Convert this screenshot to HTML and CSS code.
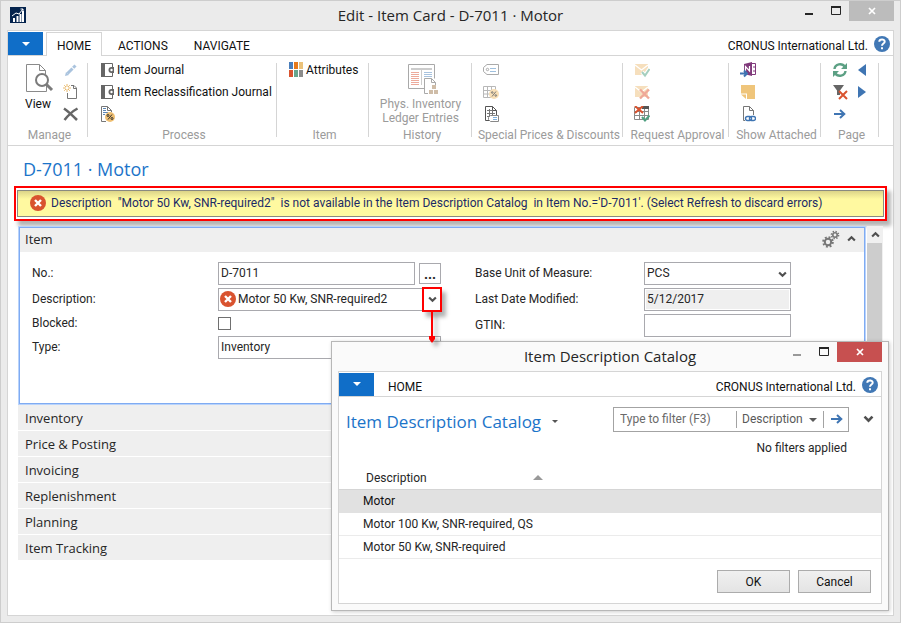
FILE: index.html
```html
<!DOCTYPE html>
<html lang="en">
<head>
<meta charset="utf-8">
<title>Edit - Item Card - D-7011 · Motor</title>
<link rel="stylesheet" href="styles.css">
</head>
<body>
<svg class="defs" aria-hidden="true">
  <symbol id="error" viewBox="0 0 16 16"><circle cx="8" cy="8" r="8" fill="#d9532f"/><path d="M5 5l6 6M11 5l-6 6" stroke="#fff" stroke-width="2.4"/></symbol>
  <symbol id="help" viewBox="0 0 16 16"><circle cx="8" cy="8" r="8" fill="#4178b5"/><path d="M5.3 5.8C5.4 2.7 10.700 2.700 10.700 5.700C10.700 7.600 8 7.500 8 9.700" fill="none" stroke="#fff" stroke-width="2"/><path d="M7 11.200h2v2h-2z" fill="#fff"/></symbol>
  <symbol id="minimize" viewBox="0 0 10 12"><path d="M1 9h8" stroke="currentColor" stroke-width="2"/></symbol>
  <symbol id="maximize" viewBox="0 0 10 12"><path d="M.5 2v7.500h9V2" fill="none" stroke="currentColor"/><path d="M0 2h10" stroke="currentColor" stroke-width="2"/></symbol>
  <symbol id="close" viewBox="0 0 8 8"><path d="M1 1l6 6M7 1L1 7" stroke="#fff" stroke-width="1.700"/></symbol>
  <symbol id="chevron" viewBox="0 0 8 6"><path d="M1 1.200l3 3 3-3" fill="none" stroke="#505050" stroke-width="1.900"/></symbol>
  <symbol id="triangle" viewBox="0 0 8 4"><path d="M0 0h8L4 4z" fill="currentColor"/></symbol>
  <symbol id="arrow" viewBox="0 0 16 16"><path d="M2 8h10M8 4l4.300 4L8 12" fill="none" stroke="#3f75b3" stroke-width="2"/></symbol>
  <symbol id="journal" viewBox="0 0 16 16"><path d="M0 1h4v14H0z" fill="#666"/><path d="M3 1.500h8.500V5M11.500 11v3.500H3" fill="none" stroke="#666"/><path d="M13 5v6h-2.500a3 3 0 010-6z" fill="#666"/><circle cx="10.500" cy="8" r="1.200" fill="#fff"/></symbol>
  <symbol id="envelope" viewBox="0 0 16 16"><path d="M1 2h13v11H1z" fill="#f6dfbd"/><path d="M1 3l6.500 5L14 3" fill="none" stroke="#fff" stroke-width="1.300"/></symbol>
</svg>

<div class="window">
  <header class="titlebar">
    <svg class="app-icon" viewBox="0 0 16 16"><path d="M0 0h16v16H0z" fill="#04234d"/><path d="M3 11h2v4H3zM6.500 9h2v6h-2zM9.500 7h2v8h-2zM12 4h2v11h-2z" fill="#fff"/><path d="M2 9l4-3 3 1 4-5M10.500 2H13v2.500" fill="none" stroke="#fff"/></svg>
    <h1>Edit - Item Card - D-7011 · Motor</h1>
    <div class="window-buttons">
      <button aria-label="Minimize"><svg><use href="#minimize"/></svg></button>
      <button aria-label="Maximize"><svg><use href="#maximize"/></svg></button>
      <button class="close" aria-label="Close"><svg><use href="#close"/></svg></button>
    </div>
  </header>

  <div class="client">
    <nav class="tabs">
      <button class="app-menu" aria-label="Application menu"><svg><use href="#triangle"/></svg></button>
      <a href="#home" class="tab active">HOME</a>
      <a href="#actions" class="tab">ACTIONS</a>
      <a href="#navigate" class="tab">NAVIGATE</a>
      <span class="company">CRONUS International Ltd.</span>
      <button class="help" aria-label="Help"><svg><use href="#help"/></svg></button>
    </nav>

    <div class="ribbon">
      <section class="group manage">
        <div class="tools">
          <button class="big">
            <svg class="view-icon" viewBox="-4 0 32 30"><path d="M20.500 17v10.500H.5v-27h13l6 6V10M13.500.5v6h6" fill="none" stroke="#8a8a8a"/><circle cx="16" cy="16" r="6" fill="#fff" stroke="#7b7b7b" stroke-width="2"/><path d="M20.500 20.500l5.500 5.500" stroke="#7b7b7b" stroke-width="3"/></svg>
            View
          </button>
          <div class="stack">
            <button aria-label="Edit"><svg viewBox="0 0 16 16"><path d="M4.500 11.500L9.500 6.500" stroke="#a9c3de" stroke-width="3"/><path d="M10.200 5.800l2.300-2.300" stroke="#a9c3de" stroke-width="3"/><path d="M3 10l3 3-4 1z" fill="#a9c3de"/></svg></button>
            <button aria-label="New"><svg viewBox="0 0 16 16"><path d="M8 1.500h3l2.500 2.500v10.500h-9V9M10.500 1.500v3h3" fill="none" stroke="#777"/><path d="M4 0v8M0 4h8M1.200 1.200l5.600 5.600M6.800 1.200L1.200 6.800" stroke="#e8b96c"/><circle cx="4" cy="4" r="1.200" fill="#fff"/></svg></button>
            <button aria-label="Delete"><svg viewBox="0 0 16 16"><path d="M1 2.500C6 6 10 10 14 14M14.500 2.500C9 5.500 5 9.500 1.500 14" fill="none" stroke="#666" stroke-width="2.500"/></svg></button>
          </div>
        </div>
        <h2>Manage</h2>
      </section>
      <section class="group process">
        <div class="tools stack">
          <button><svg><use href="#journal"/></svg>Item Journal</button>
          <button><svg><use href="#journal"/></svg>Item Reclassification Journal</button>
          <button aria-label="Calculate"><svg viewBox="0 0 16 16"><path d="M5 15.500H.5V.5h6l4 4V6M6.500.5v4h4" fill="none" stroke="#777"/><path d="M2 2.500h3M2 4.500h3M2 6.500h5M2 8.500h2" stroke="#5c86b4"/><circle cx="9" cy="11" r="5" fill="#efbf72"/><path d="M7 13.500l4-5" stroke="#333"/><circle cx="7" cy="9.500" r="1" fill="none" stroke="#333"/><circle cx="11" cy="12.500" r="1" fill="none" stroke="#333"/></svg></button>
        </div>
        <h2>Process</h2>
      </section>
      <section class="group item">
        <div class="tools stack">
          <button class="roomy"><svg viewBox="0 0 16 16"><path d="M1 0h4v7H1z" fill="#4a7ebb"/><path d="M6 0h4v7H6z" fill="#e7791a"/><path d="M11 0h4v7h-4z" fill="#ebc27a"/><path d="M1 8h4v7H1z" fill="#d9532f"/><path d="M6 8h4v7H6z" fill="#67a58d"/><path d="M11 8h4v7h-4z" fill="#8c8c8c"/></svg>Attributes</button>
        </div>
        <h2>Item</h2>
      </section>
      <section class="group history">
        <div class="tools">
          <button class="big" disabled>
            <svg class="ledger-icon" viewBox="0 0 30 30"><path d="M.5.500h26v14M16 24.500H.5V.500" fill="none" stroke="#a9a9a9"/><path d="M3 5h21" stroke="#ccc" stroke-width="2"/><path d="M13.500 6v15" stroke="#ccc"/><path d="M3 8.500h8M3 10.500h8M3 12.500h8M3 14.500h8M3 16.500h8M3 18.500h8M3 20.500h8" stroke="#edaa9b"/><path d="M16 8.500h8M16 10.500h8M16 12.500h8" stroke="#a8c3df"/><path d="M20 29.500h-3.500v-15h7l4 4V21M23.500 14.500v4h4" fill="#fff" stroke="#a9a9a9"/><path d="M24 21h4v4h-4zM21 26h4v4h-4zM26 26h4v4h-4z" fill="#cfbda8"/></svg>
            Phys. Inventory<br>Ledger Entries
          </button>
        </div>
        <h2>History</h2>
      </section>
      <section class="group prices">
        <div class="tools stack">
          <button aria-label="Prices"><svg viewBox="0 0 16 16"><path d="M4 2.500h11.500v10H4L.5 9.500v-4z" fill="#fff" stroke="#aaa"/><circle cx="4.500" cy="7.500" r="1.200" fill="none" stroke="#aaa"/><path d="M7 6.500h6M7 9.500h6" stroke="#9fc0de"/></svg></button>
          <button aria-label="Line discounts"><svg viewBox="0 0 16 16"><path d="M.5 2.500h12v11H.5zM.5 6.500h12M.5 10h12M4.500 2.500v11M8.500 2.500v11" fill="none" stroke="#b8b8b8"/><circle cx="11" cy="10" r="5" fill="#f8dfb6"/><path d="M9 12.500l4-5" stroke="#777"/><circle cx="9.200" cy="8.500" r=".8" fill="none" stroke="#777"/><circle cx="12.800" cy="11.500" r=".8" fill="none" stroke="#777"/></svg></button>
          <button aria-label="Special prices"><svg viewBox="0 0 16 16"><path d="M6 14.500H2.500v-14h7l4 4V9M9.500.5v4h4" fill="none" stroke="#555"/><path d="M4 4.500h6M4 7.500h8M4 10.500h3M6.500 3v9M9.500 5v4" stroke="#777"/><path d="M7.500 9.500h8v6h-8l-2-2v-2z" fill="#fff" stroke="#888"/><path d="M10 11.500h4M10 13.500h4" stroke="#7fb0dd"/></svg></button>
        </div>
        <h2>Special Prices &amp; Discounts</h2>
      </section>
      <section class="group approval">
        <div class="tools stack">
          <button aria-label="Send approval request" disabled><svg viewBox="0 0 16 16"><use href="#envelope"/><path d="M8 10l3 3.500L15.500 7" fill="none" stroke="#fff" stroke-width="4"/><path d="M8 10l3 3.500L15.500 7" fill="none" stroke="#a5cfbf" stroke-width="2"/></svg></button>
          <button aria-label="Cancel approval request" disabled><svg viewBox="0 0 16 16"><use href="#envelope"/><path d="M6 5.500l9 9M15 5.500l-9 9" stroke="#efa898" stroke-width="2.400"/></svg></button>
          <button aria-label="Approvals"><svg viewBox="0 0 16 16"><path d="M.5 1.500h14v12H.5zM.5 5.500h14M.5 9.500h14M5.500 1.500v12M10.500 1.500v12" fill="none" stroke="#888"/><path d="M8 0h7v3H8z" fill="#555"/><path d="M1 0l8 7M9 0L1 7" stroke="#d9532f" stroke-width="2"/><path d="M8 11l3 3.500 4.500-5" fill="none" stroke="#4f9f80" stroke-width="2"/></svg></button>
        </div>
        <h2>Request Approval</h2>
      </section>
      <section class="group attached">
        <div class="tools stack">
          <button aria-label="OneNote"><svg viewBox="0 0 16 16"><path d="M4 2l8-2v14l-8-2z" fill="#80397b"/><path d="M12 1.500h3.500v11H12M13 5h3M13 9h3" fill="none" stroke="#80397b"/><path d="M5.500 9V4.500l4 4.500V4" fill="none" stroke="#fff" stroke-width="1.200"/><path d="M0 11.500h6M4 8.500l3 3-3 3" fill="none" stroke="#3f75b3" stroke-width="2"/></svg></button>
          <button aria-label="Notes"><svg viewBox="0 0 16 16"><path d="M1 1h14v14H7V9.500H1z" fill="#efc57b"/><path d="M1 10.500h5V15z" fill="#efc57b"/></svg></button>
          <button aria-label="Links"><svg viewBox="0 0 16 16"><path d="M5 14.500H3.500v-14h6l4 4V9M9.500.5v4h4" fill="none" stroke="#777"/><rect x="5.500" y="10.500" width="6" height="4" rx="2" fill="#fff" stroke="#3f75b3" stroke-width="1.400"/><rect x="9.500" y="10.500" width="6" height="4" rx="2" fill="none" stroke="#3f75b3" stroke-width="1.400"/></svg></button>
        </div>
        <h2>Show Attached</h2>
      </section>
      <section class="group page">
        <div class="tools">
          <div class="stack">
            <button aria-label="Refresh"><svg viewBox="0 0 16 16"><path d="M2.500 7C3 2 10 .5 13 5M13.500 9C13 14 6 15.500 3 11" fill="none" stroke="#5ca084" stroke-width="2.400"/><path d="M15 1v6H9zM1 15V9h6z" fill="#5ca084"/></svg></button>
            <button aria-label="Clear filter"><svg viewBox="0 0 16 16"><path d="M1 1h11L8 6.500V11H5V6.500z" fill="#666"/><path d="M7 7l8 8M15 7l-8 8" stroke="#d9532f" stroke-width="2"/></svg></button>
            <button aria-label="Go to"><svg><use href="#arrow"/></svg></button>
          </div>
          <div class="stack">
            <button aria-label="Previous"><svg viewBox="0 0 16 16"><path d="M9 2v12L1 8z" fill="#3f75b3"/></svg></button>
            <button aria-label="Next"><svg viewBox="0 0 16 16"><path d="M1 2v12l8-6z" fill="#3f75b3"/></svg></button>
          </div>
        </div>
        <h2>Page</h2>
      </section>
    </div>

    <main class="card">
      <h2 class="page-title">D-7011 · Motor</h2>
      <div class="callout">
        <div class="message" role="alert"><svg><use href="#error"/></svg><span>Description&nbsp; "Motor 50 Kw, SNR-required2"&nbsp; is not available in the Item Description Catalog&nbsp; in Item No.='D-7011'. (Select Refresh to discard errors)</span></div>
      </div>
      <div class="scroll-area">
        <div class="fasttabs">
          <section class="fasttab-open">
            <header>
              <h3>Item</h3>
              <svg class="gears" viewBox="0 0 18 18"><g fill="none" stroke="#777"><circle cx="6" cy="12" r="3.200" stroke-width="2"/><circle cx="6" cy="12" r="4.800" stroke-width="2" stroke-dasharray="1.900 1.870"/><circle cx="13" cy="5" r="2.200" stroke-width="1.600"/><circle cx="13" cy="5" r="3.600" stroke-width="1.500" stroke-dasharray="1.400 1.430"/></g></svg>
              <button class="collapse" aria-label="Collapse"><svg class="up"><use href="#chevron"/></svg></button>
            </header>
            <form class="fields">
              <div class="column left">
                <label for="no">No.:</label>
                <div class="pair"><input id="no" value="D-7011"><button type="button" class="assist" aria-label="Assist edit">...</button></div>
                <label for="description">Description:</label>
                <div class="lookup"><svg class="error-icon"><use href="#error"/></svg><input id="description" value="Motor 50 Kw, SNR-required2">
                  <button type="button" class="drop" aria-label="Look up"><svg class="caret"><use href="#chevron"/></svg></button>
                  <svg class="pointer" viewBox="0 0 10 32"><path d="M5 0v26" stroke="red" stroke-width="2"/><path d="M2 25h6v3L5 32l-3-4z" fill="red"/></svg>
                </div>
                <label for="blocked">Blocked:</label>
                <input type="checkbox" id="blocked">
                <label for="type">Type:</label>
                <div class="select"><select id="type"><option>Inventory</option></select><svg class="caret"><use href="#chevron"/></svg></div>
              </div>
              <div class="column right">
                <label for="uom">Base Unit of Measure:</label>
                <div class="select"><select id="uom"><option>PCS</option></select><svg class="caret"><use href="#chevron"/></svg></div>
                <label for="modified">Last Date Modified:</label>
                <input id="modified" value="5/12/2017" readonly>
                <label for="gtin">GTIN:</label>
                <input id="gtin">
              </div>
            </form>
          </section>
          <button class="fasttab">Inventory</button>
          <button class="fasttab">Price &amp; Posting</button>
          <button class="fasttab">Invoicing</button>
          <button class="fasttab">Replenishment</button>
          <button class="fasttab">Planning</button>
          <button class="fasttab">Item Tracking</button>
        </div>
        <div class="scrollbar"><button aria-label="Scroll up"><svg class="up"><use href="#chevron"/></svg></button><div class="thumb"></div></div>
      </div>
    </main>
  </div>

  <div class="dialog" role="dialog" aria-labelledby="dialog-title">
    <header class="titlebar">
      <h2 id="dialog-title">Item Description Catalog</h2>
      <div class="window-buttons">
        <button class="dim" aria-label="Minimize"><svg><use href="#minimize"/></svg></button>
        <button aria-label="Maximize"><svg><use href="#maximize"/></svg></button>
        <button class="close" aria-label="Close"><svg><use href="#close"/></svg></button>
      </div>
    </header>
    <div class="dialog-body">
      <nav class="tabs">
        <button class="app-menu" aria-label="Application menu"><svg><use href="#triangle"/></svg></button>
        <a href="#dialog-home" class="tab">HOME</a>
        <span class="company">CRONUS International Ltd.</span>
        <button class="help" aria-label="Help"><svg><use href="#help"/></svg></button>
      </nav>
      <div class="list-head">
        <h3 class="page-title">Item Description Catalog <svg><use href="#triangle"/></svg></h3>
        <form class="filter">
          <input aria-label="Type to filter" placeholder="Type to filter (F3)">
          <div class="filter-field"><select aria-label="Filter field"><option>Description</option></select><svg><use href="#triangle"/></svg></div>
          <button type="button" aria-label="Apply filter"><svg><use href="#arrow"/></svg></button>
        </form>
        <button class="expand" aria-label="Expand filter"><svg><use href="#chevron"/></svg></button>
      </div>
      <p class="status">No filters applied</p>
      <table>
        <thead><tr><th><span>Description</span><svg><use href="#triangle"/></svg></th></tr></thead>
        <tbody>
          <tr class="selected"><td>Motor</td></tr>
          <tr><td>Motor 100 Kw, SNR-required, QS</td></tr>
          <tr><td>Motor 50 Kw, SNR-required</td></tr>
        </tbody>
      </table>
      <footer><button>OK</button><button>Cancel</button></footer>
    </div>
  </div>
</div>
</body>
</html>
```
FILE: styles.css
```css
* { box-sizing: border-box; }
body, h1, h2, h3, p { margin: 0; font-weight: normal; }
body, button, input, select {
  font-family: Roboto, "Open Sans", sans-serif;
  font-size: 12px;
  color: #262626;
}
body { line-height: 16px; }
button { padding: 0; border: 0; background: none; line-height: 16px; }
a { color: inherit; text-decoration: none; }
svg { display: block; flex: none; }
.defs { position: absolute; width: 0; height: 0; }

.window {
  position: relative;
  display: flex;
  flex-direction: column;
  min-height: 100vh;
  padding: 0 6px 6px;
  border: 1px solid #cdcdcd;
  background: #ebebeb;
}
.titlebar {
  position: relative;
  display: flex;
  align-items: center;
  justify-content: center;
  height: 29px;
}
.titlebar h1, .titlebar h2 { font-family: "Open Sans", sans-serif; font-size: 15px; line-height: 20px; }
.titlebar h1 { padding-bottom: 2px; }
.app-icon { position: absolute; left: 3px; top: 6px; width: 16px; height: 16px; }
.window-buttons { position: absolute; right: 0; top: 0; display: flex; }
.window-buttons button { display: grid; place-items: center; width: 27px; height: 20px; }
.window-buttons svg { width: 10px; height: 12px; }
.window-buttons .dim { color: #999; }
.window-buttons .close { width: 45px; background: #bcbcbc; }
.window-buttons .close svg { width: 8px; height: 8px; }

.client {
  flex: 1;
  border: 1px solid #d5d5d5;
  background: #fff;
}
.tabs {
  display: flex;
  align-items: flex-end;
  height: 25px;
  padding-right: 3px;
  border-bottom: 1px solid #d5d5d5;
}
.app-menu {
  display: grid;
  place-items: center;
  width: 35px;
  height: 23px;
  background: #106ec8;
  color: #fff;
}
.app-menu svg { width: 8px; height: 4px; }
.tab { height: 22px; margin-right: 4px; padding: 5px 11px 0; color: #111; }
.tabs .active {
  width: 56px;
  height: 24px;
  margin: 0 5px -1px 3px;
  padding: 5px 0 0;
  border: 1px solid #d5d5d5;
  border-bottom: 0;
  background: #fff;
  text-align: center;
}
.company { margin-left: auto; padding-bottom: 1px; color: #111; }
.help { margin: 0 0 3px 6px; }
.help svg { width: 16px; height: 16px; }

.ribbon { display: flex; padding-top: 3px; border-bottom: 1px solid #d5d5d5; }
.group { position: relative; display: flex; flex-direction: column; height: 86px; }
.group::after {
  content: "";
  position: absolute;
  top: 4px;
  right: 0;
  bottom: 8px;
  width: 1px;
  background: #d5d5d5;
}
.group h2 { padding-left: 3px; font-size: 12px; line-height: 20px; text-align: center; color: #9b9b9b; white-space: nowrap; }
.tools { display: flex; flex: 1; padding-left: 11px; }
.stack { display: flex; flex-direction: column; }
.stack button { display: flex; align-items: center; height: 22px; color: #111; white-space: nowrap; }
.stack svg { width: 16px; height: 16px; }
.roomy { gap: 2px; }
.big { display: flex; flex-direction: column; align-items: center; padding-top: 5px; line-height: 14px; color: #111; }
.big:disabled { color: #9b9b9b; }
.manage { width: 80px; }
.manage .tools { padding-left: 14px; gap: 9px; }
.view-icon { width: 32px; height: 30px; margin-bottom: 3px; }
.process { width: 189px; }
.process .tools { padding-left: 13px; }
.item { width: 92px; }
.history { width: 103px; }
.history .tools { justify-content: center; padding: 0; }
.ledger-icon { width: 30px; height: 30px; margin: 0 0 3px 4px; }
.prices { width: 151px; }
.approval { width: 106px; }
.attached { width: 92px; }
.page { width: 58px; }
.page .tools { gap: 9px; }
.page .stack { width: 16px; }

.card { padding: 11px 6px 0; }
.page-title { font-family: "Open Sans", sans-serif; font-size: 18px; line-height: 24px; color: #1b74c9; }
.card .page-title { padding-left: 9px; }
.callout {
  margin-top: 5px;
  padding: 2px 1px;
  border: 2px solid #f00;
  background: #fff;
  box-shadow: 4px 5px 4px rgba(0, 0, 0, .3);
}
.message {
  display: flex;
  align-items: center;
  gap: 5px;
  height: 27px;
  padding: 0 0 2px 12px;
  border: 1px solid #8a8a80;
  background: linear-gradient(#dcd488, #fff9a0 8px);
  color: #1c2a66;
  white-space: nowrap;
}
.message svg { width: 16px; height: 16px; }

.scroll-area { display: flex; gap: 1px; padding: 5px 4px 0; }
.fasttabs { flex: 1; }
.fasttab-open { position: relative; height: 179px; border: 1px solid #b9d3fb; outline: 1px solid #7fabf2; outline-offset: -2px; }
.fasttab-open header { display: flex; align-items: center; height: 25px; padding: 0 9px 2px 6px; background: #efefef; }
.fasttab-open h3, .fasttab { font-family: "Open Sans", sans-serif; font-size: 13px; line-height: 20px; }
.gears { width: 18px; height: 18px; margin-left: auto; }
.collapse { margin-left: 7px; }
.up { transform: rotate(180deg); }
.collapse svg, .caret, .scrollbar svg { width: 9px; height: 7px; }
.fields { display: flex; gap: 34px; padding: 10px 13px; }
.column { display: grid; gap: 3px 0; align-items: center; align-content: start; }
.column label { padding-bottom: 2px; }
.left { grid-template-columns: 186px 223px; grid-template-rows: 23px 23px 19px 23px; }
.right { grid-template-columns: 169px 147px; grid-template-rows: 23px 23px 23px; }
.column input:not([type]), .column select {
  width: 100%;
  height: 23px;
  padding: 0 2px 1px;
  border: 1px solid #a9a9ae;
  border-radius: 0;
  background: #fff;
  outline: 0;
}
.column select, .filter select { appearance: none; }
.column input[readonly] { background: #efefef; box-shadow: inset 0 0 0 1px #fff; }
.pair { display: flex; gap: 4px; }
.pair .assist { flex: none; width: 22px; height: 21px; margin-top: 1px; border: 1px solid #a9a9ae; font-size: 14px; font-weight: bold; line-height: 18px; }
.lookup, .select { position: relative; }
.lookup .error-icon { position: absolute; left: 2px; top: 3px; width: 16px; height: 16px; }
.column .lookup input { padding-left: 19px; }
.lookup .drop {
  position: absolute;
  right: -1px;
  top: -1px;
  display: grid;
  place-items: center;
  width: 20px;
  height: 25px;
  border: 2px solid #f00;
  background: #fff;
  box-shadow: 4px 5px 4px rgba(0, 0, 0, .3);
}
.pointer { position: absolute; right: 4px; top: 23px; z-index: 3; width: 10px; height: 32px; filter: drop-shadow(4px 4px 2px rgba(0, 0, 0, .3)); }
.select .caret { position: absolute; right: 4px; top: 9px; }
.column input[type="checkbox"] { appearance: none; width: 13px; height: 13px; margin: 0; border: 1px solid #707070; background: #fff; }
.fasttab {
  display: block;
  width: 100%;
  height: 26px;
  padding: 1px 7px 0;
  border-bottom: 1px solid #fff;
  background: #efefef;
  text-align: left;
}
.scrollbar { display: flex; flex-direction: column; width: 16px; background: #f0f0f0; }
.scrollbar button { display: grid; place-items: center; height: 17px; }
.thumb { flex: 1; margin-right: 1px; background: #cdcdcd; }

.dialog {
  position: absolute;
  right: 11px;
  bottom: 11px;
  z-index: 2;
  width: 558px;
  padding: 0 6px 6px;
  border: 1px solid #b7b7b7;
  background: #fafafa;
  box-shadow: 1px 1px 4px rgba(0, 0, 0, .2);
}
.dialog .close { background: #c75050; }
.dialog-body { border: 1px solid #d5d5d5; background: #fff; }
.dialog .tab { margin-left: 3px; }
.list-head { display: flex; align-items: center; padding: 8px 7px 0; }
.dialog .page-title { padding-top: 5px; font-size: 17px; }
.dialog .page-title svg { display: inline-block; width: 6px; height: 3px; margin: 0 0 5px 6px; color: #555; }
.filter { display: flex; align-items: center; width: 236px; height: 25px; margin-left: auto; border: 1px solid #a3a3a3; }
.filter input { flex: 1; width: 0; padding: 0 6px 1px; border: 0; background: none; outline: 0; }
.filter input::placeholder { color: #6a6a6a; opacity: 1; }
.filter-field { position: relative; width: 88px; border: solid #a3a3a3; border-width: 0 1px; }
.filter select { width: 100%; height: 17px; padding: 0 5px; border: 0; background: none; color: #595959; }
.filter-field svg { position: absolute; right: 6px; top: 7px; width: 8px; height: 4px; color: #595959; }
.filter button { width: 24px; padding-left: 5px; }
.filter button svg { width: 16px; height: 16px; }
.expand { margin-left: 14px; }
.expand svg { width: 11px; height: 8px; }
.status { padding: 6px 34px 0 0; text-align: right; }
table { width: 100%; margin-top: 11px; border-collapse: collapse; }
th, td { height: 23px; padding: 0; font-weight: normal; text-align: left; border-bottom: 1px solid #ebebeb; }
th { display: flex; align-items: center; padding-left: 27px; border-color: #d5d5d5; }
th span { width: 167px; }
th svg { width: 10px; height: 5px; color: #999; transform: rotate(180deg); }
td { padding-left: 24px; }
.selected td { border-color: #e1e1e1; background: #e1e1e1; color: #111; }
footer { display: flex; justify-content: flex-end; gap: 8px; padding: 11px 10px 10px; }
footer button { width: 73px; height: 23px; border: 1px solid #acacac; background: linear-gradient(#f0f0f0, #e4e4e4); color: #111; }
```
